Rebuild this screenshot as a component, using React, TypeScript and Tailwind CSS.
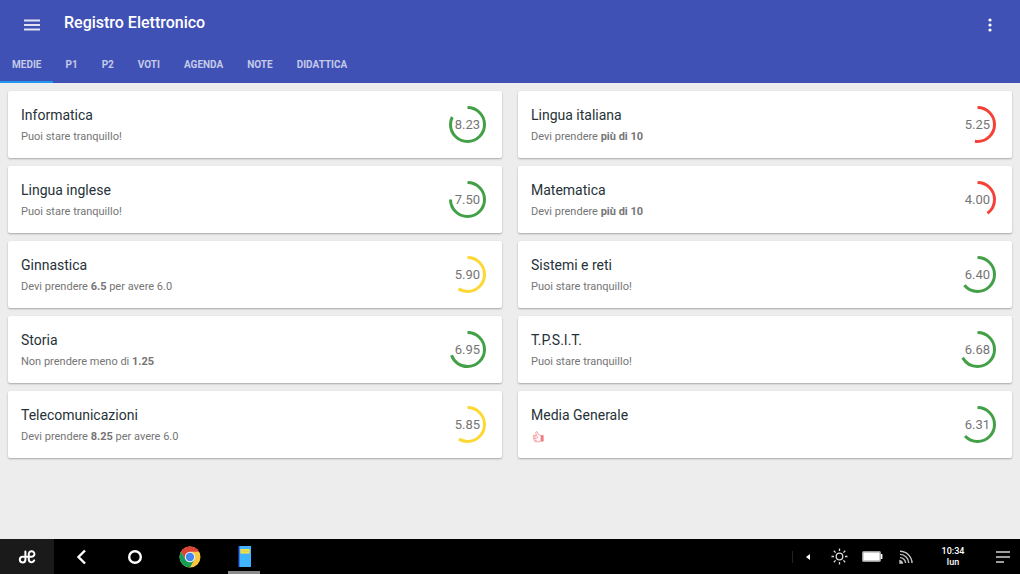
import React, { useState } from "react";

type Subject = {
  name: string;
  grade: number;
  color: string;
  hint: React.ReactNode;
};

const GREEN = "#43a047";
const YELLOW = "#fdd835";
const RED = "#f44336";

const tabs = ["MEDIE", "P1", "P2", "VOTI", "AGENDA", "NOTE", "DIDATTICA"];

const ThumbIcon = () => (
  <svg
    width="14"
    height="12"
    viewBox="0 0 14 12"
    fill="none"
    stroke="#f4858b"
    strokeWidth="0.8"
    role="img"
    aria-label="Bene"
  >
    <path d="M9.8 4.6 7.4 3.4 6.2.9C5.6.3 4.6.8 4.8 1.8L5.4 4.4 3 4.2C1.9 4.3 1.9 5.8 2.9 5.9 2.1 6.2 2.2 7.4 3.1 7.6 2.5 8 2.8 9.2 3.6 9.3 3.3 10 3.8 10.8 4.6 10.8H7.8L9.8 9.8" />
    <path d="M2.9 5.9H5.4M3.1 7.6H5.6M3.6 9.3H5.8M5.4 4.4 6.6 5.6 6.2 7.2" />
    <path d="M10 4.4H12.2V10.2H10Z" fill="#f4737a" />
  </svg>
);

const subjects: Subject[] = [
  { name: "Informatica", grade: 8.23, color: GREEN, hint: "Puoi stare tranquillo!" },
  { name: "Lingua italiana", grade: 5.25, color: RED, hint: <>Devi prendere <b>più di 10</b></> },
  { name: "Lingua inglese", grade: 7.5, color: GREEN, hint: "Puoi stare tranquillo!" },
  { name: "Matematica", grade: 4, color: RED, hint: <>Devi prendere <b>più di 10</b></> },
  { name: "Ginnastica", grade: 5.9, color: YELLOW, hint: <>Devi prendere <b>6.5</b> per avere 6.0</> },
  { name: "Sistemi e reti", grade: 6.4, color: GREEN, hint: "Puoi stare tranquillo!" },
  { name: "Storia", grade: 6.95, color: GREEN, hint: <>Non prendere meno di <b>1.25</b></> },
  { name: "T.P.S.I.T.", grade: 6.68, color: GREEN, hint: "Puoi stare tranquillo!" },
  { name: "Telecomunicazioni", grade: 5.85, color: YELLOW, hint: <>Devi prendere <b>8.25</b> per avere 6.0</> },
  { name: "Media Generale", grade: 6.31, color: GREEN, hint: <ThumbIcon /> },
];

const GradeRing = ({ grade, color }: { grade: number; color: string }) => (
  <div className="grid size-[37px] shrink-0 place-items-center">
    <svg viewBox="0 0 37 37" className="col-start-1 row-start-1 size-full -rotate-90">
      <circle
        cx="18.5"
        cy="18.5"
        r="17"
        fill="none"
        stroke={color}
        strokeWidth="3"
        pathLength={10}
        strokeDasharray={`${grade} 10`}
      />
    </svg>
    <span className="col-start-1 row-start-1 text-[13px] leading-4 text-[#757575]">
      {grade.toFixed(2)}
    </span>
  </div>
);

const SubjectCard = ({ name, grade, color, hint }: Subject) => (
  <article className="flex h-[67px] items-center justify-between rounded-xs bg-white pr-4 pl-[13px] shadow-[0_1px_2px_rgba(0,0,0,0.3)]">
    <div>
      <h2 className="text-sm leading-5 text-[#263238]">{name}</h2>
      <p className="mt-1 flex h-4 items-center text-[11px] leading-4 whitespace-pre text-[#757575]">
        {hint}
      </p>
    </div>
    <GradeRing grade={grade} color={color} />
  </article>
);

const ChromeIcon = () => (
  <svg width="22" height="22" viewBox="0 0 22 22">
    <circle cx="11" cy="11" r="10.5" fill="#fbc93d" />
    <path d="M1.9 5.8A10.5 10.5 0 0 1 20.1 5.8H11L6.5 13.6Z" fill="#dc4437" />
    <path d="M1.9 5.8A10.5 10.5 0 0 0 11 21.5L15.5 13.6 11 16.2 6.5 13.6Z" fill="#139d58" />
    <circle cx="11" cy="11" r="5.2" fill="#f1f1f1" />
    <circle cx="11" cy="11" r="4.2" fill="#4285f4" />
  </svg>
);

const Taskbar = () => (
  <footer className="flex h-[35px] items-stretch justify-between bg-black text-white">
    <div className="flex">
      <button aria-label="Avvio" className="grid w-[54px] place-items-center bg-[#1a1a1a]">
        <svg width="18" height="16" viewBox="0 0 18 16" fill="none" stroke="#fff" strokeWidth="2" strokeLinecap="round">
          <path d="M7.4 2.4V11A2.8 2.8 0 1 1 4.6 7.8H13.4A2.8 2.8 0 1 0 10.8 5V10.6A2.8 2.8 0 0 0 16.2 11.4" />
        </svg>
      </button>
      <button aria-label="Indietro" className="grid w-[54px] place-items-center">
        <svg width="10" height="16" viewBox="0 0 10 16" fill="none" stroke="#fff" strokeWidth="2.4">
          <path d="M9 1.5 2.5 8 9 14.5" />
        </svg>
      </button>
      <button aria-label="Home" className="grid w-[54px] place-items-center">
        <svg width="16" height="16" viewBox="0 0 16 16" fill="none" stroke="#fff" strokeWidth="2.4">
          <circle cx="8" cy="8" r="5.8" />
        </svg>
      </button>
      <button aria-label="Chrome" className="grid w-14 place-items-center">
        <ChromeIcon />
      </button>
      <button aria-label="Registro Elettronico" className="ml-2.5 flex w-8 flex-col items-center justify-between pt-[7px]">
        <svg width="13" height="21" viewBox="0 0 13 21">
          <path d="M0 0H13V21H0Z" fill="#40b4ff" />
          <path d="M0 0H1.4V21H0Z" fill="#1a2a8c" />
          <path d="M2.4 3H11.6V7.6H2.4Z" fill="#f5e04a" />
          <path d="M3.5 4.6H10.5V5.8H3.5Z" fill="#d8cf52" />
        </svg>
        <span className="h-[3px] w-full bg-[#8a8a8a]" />
      </button>
    </div>
    <div className="flex items-center">
      <span className="mr-[13px] h-3 w-px bg-[#222]" />
      <button aria-label="Espandi">
        <svg width="5" height="6" viewBox="0 0 5 6">
          <path d="M4 0V6L0 3Z" fill="#fff" />
        </svg>
      </button>
      <svg className="ml-5" width="17" height="17" viewBox="0 0 17 17" fill="none" stroke="#d8d8d8" strokeWidth="1.3">
        <circle cx="8.5" cy="8.5" r="3.3" />
        <path d="M8.5 .5V3M8.5 14V16.5M.5 8.5H3M14 8.5H16.5M2.8 2.8 4.6 4.6M12.4 12.4 14.2 14.2M2.8 14.2 4.6 12.4M12.4 4.6 14.2 2.8" />
      </svg>
      <svg className="ml-[14px]" width="21" height="11" viewBox="0 0 21 11">
        <rect x="0.7" y="0.7" width="17.6" height="9.6" rx="1" fill="#fff" stroke="#9a9a9a" strokeWidth="1.4" />
        <path d="M18.8 3H20.4V8H18.8Z" fill="#fff" />
      </svg>
      <svg className="ml-4" width="14" height="14" viewBox="0 0 14 14" fill="none" stroke="#c4c4c4" strokeWidth="1.4">
        <path d="M1 1.2A12 12 0 0 1 13 13M1 4.4A8.8 8.8 0 0 1 9.8 13M1 7.6A5.6 5.6 0 0 1 6.6 13" />
        <path d="M1 10.6A2.8 2.8 0 0 1 3.4 13H1Z" fill="#c4c4c4" />
      </svg>
      <div className="ml-[27px] w-[26px] text-center text-[9px] leading-[11px] font-medium">
        <div>10:34</div>
        <div>lun</div>
      </div>
      <button aria-label="Notifiche" className="mr-[10px] ml-[30px]">
        <svg width="14" height="12" viewBox="0 0 14 12" stroke="#d0d0d0" strokeWidth="1.3">
          <path d="M0 1H14M0 6H14M0 11H8" />
        </svg>
      </button>
    </div>
  </footer>
);

const App = () => {
  const [active, setActive] = useState("MEDIE");

  return (
    <div className="flex min-h-screen flex-col bg-[#ededed] font-[Roboto,sans-serif]">
      <header className="bg-[#3f51b5] text-white">
        <div className="flex h-[50px] items-center pr-[26px] pl-6">
          <button aria-label="Menu">
            <svg width="16" height="12" viewBox="0 0 16 12" stroke="#dfe2f3" strokeWidth="1.8">
              <path d="M0 1.5H16M0 6H16M0 10.5H16" />
            </svg>
          </button>
          <h1 className="mb-1 ml-6 flex-1 text-base leading-5 font-medium">Registro Elettronico</h1>
          <button aria-label="Altro">
            <svg width="8" height="14" viewBox="0 0 8 14" fill="#fff">
              <circle cx="4" cy="2" r="1.6" />
              <circle cx="4" cy="7" r="1.6" />
              <circle cx="4" cy="12" r="1.6" />
            </svg>
          </button>
        </div>
        <nav className="flex h-[33px]">
          {tabs.map((tab) => (
            <button
              key={tab}
              onClick={() => setActive(tab)}
              className={`border-b-2 px-3 pb-0.5 text-[10px] leading-3 font-bold text-[#c5cae9] ${
                active === tab ? "border-[#2196f3]" : "border-transparent"
              }`}
            >
              {tab}
            </button>
          ))}
        </nav>
      </header>
      <main className="grid flex-1 grid-cols-2 content-start gap-x-4 gap-y-2 px-2 pt-2">
        {subjects.map((subject) => (
          <SubjectCard key={subject.name} {...subject} />
        ))}
      </main>
      <Taskbar />
    </div>
  );
};

export default App;
